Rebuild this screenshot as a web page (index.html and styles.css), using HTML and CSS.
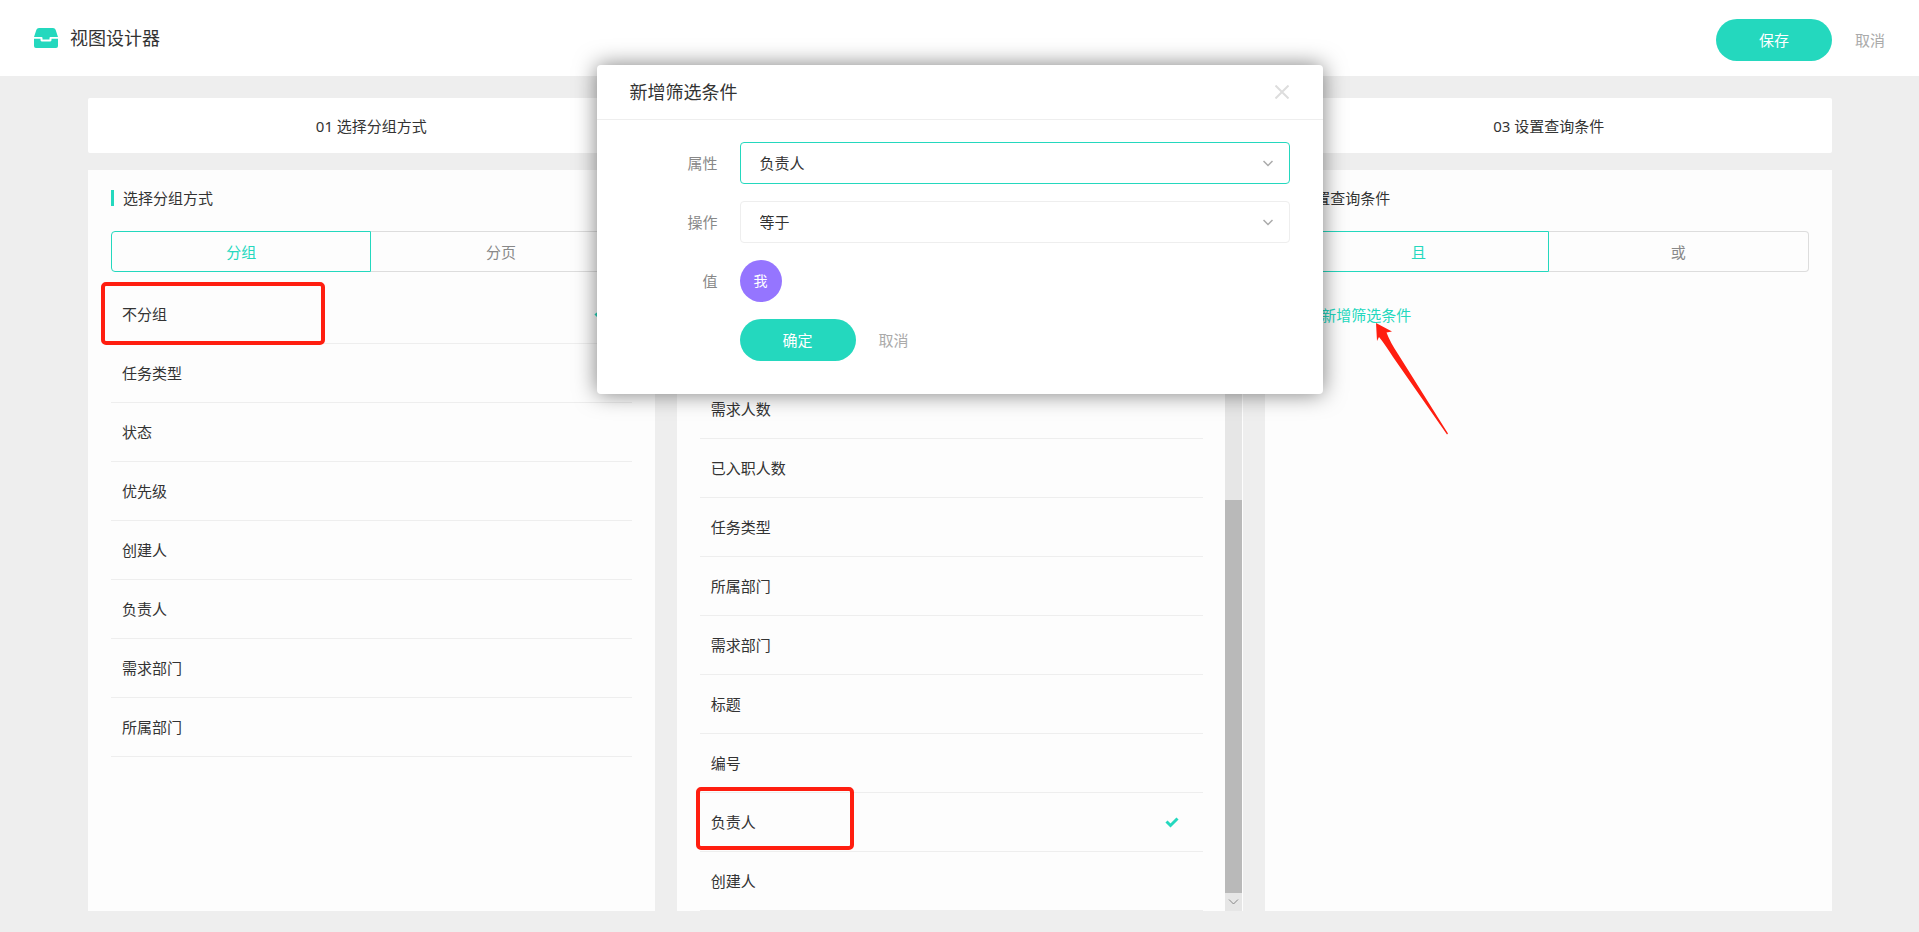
FILE: index.html
```html
<!DOCTYPE html>
<html lang="zh-CN">
<head>
<meta charset="utf-8">
<title>视图设计器</title>
<link rel="stylesheet" href="styles.css">
</head>
<body>
<header class="topbar">
  <div class="brand">
    <svg class="brand-icon" viewBox="0 0 24 20" aria-hidden="true">
      <path d="M5 0h14q2 0 2.600 1.800L24 9h-7.500q-1 0-1 1v1.500h-7V10q0-1-1-1H0L2.400 1.800Q3 0 5 0z"/>
      <path d="M0 10.800h6.500V12q0 1.400 1.200 1.400h8.600q1.200 0 1.200-1.400v-1.200H24V18q0 2-2 2H2q-2 0-2-2z"/>
    </svg>
    <h1 class="brand-title">视图设计器</h1>
  </div>
  <div class="actions">
    <button class="btn-primary" type="button">保存</button>
    <button class="btn-text" type="button">取消</button>
  </div>
</header>

<main class="designer">
  <div class="steps columns">
    <div class="step">01 选择分组方式</div>
    <div class="step"></div>
    <div class="step">03 设置查询条件</div>
  </div>

  <div class="panels columns">
    <section class="panel">
      <h2 class="panel-title">选择分组方式</h2>
      <div class="tabs">
        <button class="tab tab-active" type="button">分组</button>
        <button class="tab" type="button">分页</button>
      </div>
      <ul class="options">
        <li class="option">不分组
          <svg class="check" viewBox="0 0 14 11" aria-hidden="true"><path d="M1.500 4.500 5.500 8.500 12.500 1.500"/></svg>
          <span class="mark mark-group"></span>
        </li>
        <li class="option">任务类型</li>
        <li class="option">状态</li>
        <li class="option">优先级</li>
        <li class="option">创建人</li>
        <li class="option">负责人</li>
        <li class="option">需求部门</li>
        <li class="option">所属部门</li>
      </ul>
    </section>

    <section class="panel panel-scroll">
      <ul class="options options-end">
        <li class="option">需求人数</li>
        <li class="option">已入职人数</li>
        <li class="option">任务类型</li>
        <li class="option">所属部门</li>
        <li class="option">需求部门</li>
        <li class="option">标题</li>
        <li class="option">编号</li>
        <li class="option">负责人
          <svg class="check" viewBox="0 0 14 11" aria-hidden="true"><path d="M1.500 4.500 5.500 8.500 12.500 1.500"/></svg>
          <span class="mark mark-owner"></span>
        </li>
        <li class="option">创建人</li>
      </ul>
      <div class="scrollbar">
        <div class="scroll-thumb"></div>
        <svg class="scroll-arrow" viewBox="0 0 17 18" aria-hidden="true"><path d="M4 6.500 8.500 11 13 6.500"/></svg>
      </div>
    </section>

    <section class="panel">
      <h2 class="panel-title">设置查询条件</h2>
      <div class="tabs">
        <button class="tab tab-active" type="button">且</button>
        <button class="tab" type="button">或</button>
      </div>
      <div class="add-row">
        <button class="add-filter" type="button">新增筛选条件</button>
        <svg class="arrow" viewBox="0 0 76 114" aria-hidden="true"><path d="M0 0 16 8.500 10.500 9.500Q14 19 22 31L72 110.500 71 111.500 17 34Q8 20 3 14L1 18z"/></svg>
      </div>
    </section>
  </div>
</main>

<div class="modal" role="dialog" aria-labelledby="modal-title">
  <div class="modal-head">
    <h2 class="modal-title" id="modal-title">新增筛选条件</h2>
    <button class="close" type="button" aria-label="关闭">
      <svg viewBox="0 0 14 14" aria-hidden="true"><path d="M0.500 0.500 13.500 13.500M13.500 0.500 0.500 13.500"/></svg>
    </button>
  </div>
  <form class="form">
    <label class="label" for="attr">属性</label>
    <div class="select-wrap">
      <select class="select select-focus" id="attr"><option>负责人</option></select>
      <svg class="chevron" viewBox="0 0 10 7" aria-hidden="true"><path d="M0.500 1 5 5.500 9.500 1"/></svg>
    </div>
    <label class="label" for="op">操作</label>
    <div class="select-wrap">
      <select class="select" id="op"><option>等于</option></select>
      <svg class="chevron" viewBox="0 0 10 7" aria-hidden="true"><path d="M0.500 1 5 5.500 9.500 1"/></svg>
    </div>
    <span class="label">值</span>
    <button class="avatar" type="button">我</button>
    <div class="form-actions">
      <button class="btn-primary" type="button">确定</button>
      <button class="btn-text" type="button">取消</button>
    </div>
  </form>
</div>
</body>
</html>
```
FILE: styles.css
```css
* {
  box-sizing: border-box;
}

body {
  margin: 0;
  min-height: 100vh;
  display: flex;
  flex-direction: column;
  background: #eee;
  color: #333;
  font: 15px/24px "Noto Sans", "Noto Sans CJK SC", sans-serif;
}

h1,
h2,
ul {
  margin: 0;
  padding: 0;
  font-weight: 400;
}

button,
select {
  margin: 0;
  padding: 0;
  border: 0;
  background: none;
  color: inherit;
  font: inherit;
}

.topbar {
  display: flex;
  align-items: center;
  justify-content: space-between;
  height: 76px;
  padding: 0 34px;
  background: #fff;
}

.brand {
  display: flex;
  align-items: center;
  gap: 12px;
}

.brand-icon {
  width: 24px;
  height: 20px;
  fill: #24d8be;
}

.brand-title {
  font-size: 18px;
}

.actions,
.form-actions {
  display: flex;
  align-items: center;
  gap: 23px;
}

.actions {
  padding-top: 4px;
}

.btn-primary {
  width: 116px;
  height: 42px;
  border-radius: 21px;
  background: #24d8be;
  color: #fff;
}

.btn-text {
  color: #aaa;
}

.designer {
  flex: 1;
  display: flex;
  flex-direction: column;
  gap: 17px;
  padding: 22px 87px 21px 88px;
}

.columns {
  display: grid;
  grid-template-columns: repeat(3, 1fr);
  column-gap: 22px;
}

.steps {
  border-radius: 2px;
  background: #fff;
}

.step {
  height: 55px;
  line-height: 56px;
  text-align: center;
}

.panels {
  flex: 1;
}

.panel {
  padding: 16px 23px 0;
  background: #fdfdfd;
}

.panel-title {
  display: flex;
  align-items: center;
  gap: 9px;
  font-size: 15px;
}

.panel-title::before {
  content: "";
  width: 3px;
  height: 16px;
  background: #24d8be;
}

.tabs {
  display: grid;
  grid-template-columns: 1fr 1fr;
  margin: 21px 0 13px;
}

.tab {
  height: 41px;
  border: 1px solid #ddd;
  border-left: 0;
  border-radius: 0 4px 4px 0;
  color: #888;
}

.tab-active {
  border: 1px solid #24d8be;
  border-radius: 4px 0 0 4px;
  color: #24d8be;
}

.options {
  list-style: none;
}

.option {
  position: relative;
  display: flex;
  align-items: center;
  justify-content: space-between;
  height: 59px;
  padding: 0 24px 0 11px;
  border-bottom: 1px solid #eee;
}

.check {
  width: 14px;
  height: 11px;
  fill: none;
  stroke: #24d8be;
  stroke-width: 3;
}

.mark {
  position: absolute;
  height: 63px;
  border: 4px solid #ff1e10;
  border-radius: 5px;
}

.mark-group {
  top: -3px;
  left: -10px;
  width: 224px;
}

.mark-owner {
  top: -6px;
  left: -4px;
  width: 158px;
}

.panel-scroll {
  display: flex;
  align-items: flex-end;
  gap: 22px;
  padding: 0 1px 0 23px;
}

.options-end {
  flex: 1;
}

.scrollbar {
  align-self: stretch;
  display: flex;
  flex-direction: column;
  justify-content: flex-end;
  width: 17px;
  background: #e6e6e6;
}

.scroll-thumb {
  height: 53%;
  background: #b9b9b9;
}

.scroll-arrow {
  width: 17px;
  height: 18px;
  fill: none;
  stroke: #888;
}

.add-row {
  position: relative;
  padding: 18px 33px;
}

.add-filter {
  color: #24d8be;
}

.arrow {
  position: absolute;
  top: 38px;
  left: 88px;
  width: 76px;
  height: 114px;
  fill: #ff1e10;
}

.modal {
  position: absolute;
  top: 65px;
  left: 50%;
  width: 726px;
  margin-left: -363px;
  border-radius: 4px;
  background: #fff;
  box-shadow: 0 0 22px rgba(0, 0, 0, 0.5);
}

.modal-head {
  display: flex;
  align-items: center;
  justify-content: space-between;
  height: 55px;
  padding: 0 34px 0 33px;
  border-bottom: 1px solid #eee;
}

.modal-title {
  font-size: 18px;
}

.close {
  display: flex;
}

.close svg {
  width: 14px;
  height: 14px;
  stroke: #ddd;
  stroke-width: 2;
}

.form {
  display: grid;
  grid-template-columns: 88px 1fr;
  align-items: center;
  gap: 17px 22px;
  padding: 22px 33px 33px;
}

.label {
  color: #888;
  text-align: right;
}

.select-wrap {
  position: relative;
}

.select {
  display: block;
  width: 100%;
  height: 42px;
  padding: 0 19px;
  border: 1px solid #eee;
  border-radius: 4px;
  appearance: none;
}

.select-focus {
  border-color: #24d8be;
}

.chevron {
  position: absolute;
  top: 18px;
  right: 17px;
  width: 10px;
  height: 7px;
  fill: none;
  stroke: #aaa;
  stroke-width: 1.5;
  pointer-events: none;
}

.avatar {
  width: 42px;
  height: 42px;
  border-radius: 50%;
  background: #9575ff;
  color: #fff;
  font-size: 14px;
}

.form-actions {
  grid-column: 2;
}
```
